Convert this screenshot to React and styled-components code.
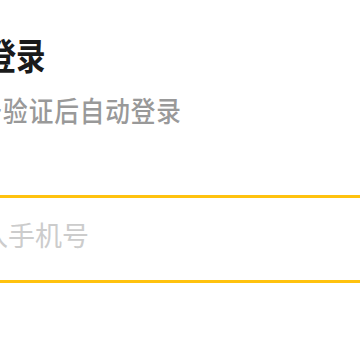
import React from "react";
import styled, { createGlobalStyle } from "styled-components";

const Global = createGlobalStyle`
  html, body { margin: 0; padding: 0; background: #fff; overflow: hidden; }
  body { font-family: "Noto Sans CJK SC", "Noto Sans", sans-serif; }
`;

const Page = styled.div`
  width: 360px;
  height: 360px;
  overflow: hidden;
  position: relative;
`;

const Panel = styled.div`
  margin-left: -151px;
  width: 560px;
  padding-top: 32px;
  display: flex;
  flex-direction: column;
  align-items: flex-start;
`;

const Title = styled.h1`
  margin: 0 0 0 ${(p) => p.$indent}px;
  font-size: 36px;
  line-height: 44px;
  font-weight: 700;
  color: #1a1a1a;
  white-space: nowrap;
  transform: scaleX(0.82);
  transform-origin: left center;
`;

const Subtitle = styled.p`
  margin: 16px 0 0 ${(p) => p.$indent}px;
  font-size: 28px;
  line-height: 36px;
  letter-spacing: 1px;
  font-weight: 500;
  color: #999;
  white-space: nowrap;
  transform: scaleX(0.88);
  transform-origin: left center;
`;

const Field = styled.div`
  align-self: stretch;
  margin-top: 67px;
  height: 82px;
  box-sizing: content-box;
  border-top: 3px solid #ffc20e;
  border-bottom: 3px solid #ffc20e;
  display: flex;
  align-items: center;
`;

const Input = styled.input`
  border: none;
  outline: none;
  background: transparent;
  margin: 0 0 10px ${(p) => p.$indent}px;
  width: 400px;
  font-family: inherit;
  font-size: 27px;
  color: #333;
  padding: 0;
  &::placeholder { color: #ccc; }
`;

export default function App() {
  return (
    <Page>
      <Global />
      <Panel>
        <Title $indent={49}>手机号登录</Title>
        <Subtitle $indent={1}>未注册手机号验证后自动登录</Subtitle>
        <Field>
          <Input $indent={78} placeholder="请输入手机号" />
        </Field>
      </Panel>
    </Page>
  );
}
